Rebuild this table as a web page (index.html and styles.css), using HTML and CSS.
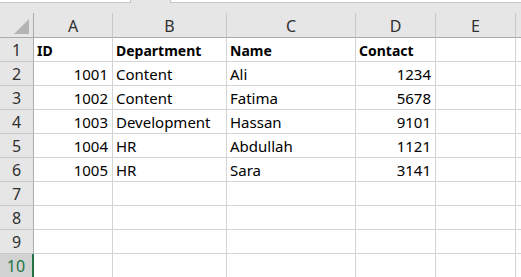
FILE: index.html
```html
<!DOCTYPE html>
<html>
<head>
<meta charset="utf-8">
<link rel="stylesheet" href="styles.css">
</head>
<body>
<div class="topbar">
  <div class="box box-name"></div>
  <div class="box box-formula"></div>
</div>
<div class="sheet">
  <div class="corner"><span class="tri"></span></div>
  <div class="ch">A</div><div class="ch">B</div><div class="ch">C</div><div class="ch">D</div><div class="ch">E</div><div class="ch last"></div>

  <div class="rh">1</div><div class="c b">ID</div><div class="c b">Department</div><div class="c b">Name</div><div class="c b">Contact</div><div class="c"></div><div class="c"></div>
  <div class="rh">2</div><div class="c r">1001</div><div class="c">Content</div><div class="c">Ali</div><div class="c r">1234</div><div class="c"></div><div class="c"></div>
  <div class="rh">3</div><div class="c r">1002</div><div class="c">Content</div><div class="c">Fatima</div><div class="c r">5678</div><div class="c"></div><div class="c"></div>
  <div class="rh">4</div><div class="c r">1003</div><div class="c">Development</div><div class="c">Hassan</div><div class="c r">9101</div><div class="c"></div><div class="c"></div>
  <div class="rh">5</div><div class="c r">1004</div><div class="c">HR</div><div class="c">Abdullah</div><div class="c r">1121</div><div class="c"></div><div class="c"></div>
  <div class="rh">6</div><div class="c r">1005</div><div class="c">HR</div><div class="c">Sara</div><div class="c r">3141</div><div class="c"></div><div class="c"></div>
  <div class="rh">7</div><div class="c"></div><div class="c"></div><div class="c"></div><div class="c"></div><div class="c"></div><div class="c"></div>
  <div class="rh">8</div><div class="c"></div><div class="c"></div><div class="c"></div><div class="c"></div><div class="c"></div><div class="c"></div>
  <div class="rh">9</div><div class="c"></div><div class="c"></div><div class="c"></div><div class="c"></div><div class="c"></div><div class="c"></div>
  <div class="rh sel">10</div><div class="c"></div><div class="c"></div><div class="c"></div><div class="c"></div><div class="c"></div><div class="c"></div>
</div>
</body>
</html>
```
FILE: styles.css
```css
html, body {
  margin: 0;
  padding: 0;
  background: #e6e6e6;
  overflow: hidden;
  width: 521px;
  height: 277px;
}
body {
  font-family: "Noto Sans", "Open Sans", sans-serif;
  color: #000;
}
.topbar {
  height: 13px;
  display: flex;
  gap: 39px;
  align-items: flex-start;
}
.box {
  height: 2px;
  background: #fff;
  border-bottom: 1px solid #c6c6c6;
}
.box-name { width: 130px; border-right: 1px solid #c6c6c6; }
.box-formula { flex: 1; border-left: 1px solid #c6c6c6; }
.sheet {
  display: grid;
  grid-template-columns: 34px 79px 114px 129px 80px 80px 1fr;
  grid-template-rows: 25px repeat(10, 24px);
  background: #fff;
}
.corner {
  background: #e6e6e6;
  border-right: 1px solid #ababab;
  border-bottom: 1px solid #ababab;
  position: relative;
}
.tri {
  position: absolute;
  right: 4px;
  bottom: 3px;
  width: 0;
  height: 0;
  border-left: 15px solid transparent;
  border-bottom: 15px solid #b4b4b4;
}
.ch {
  background: #e6e6e6;
  border-right: 1px solid #c8c8c8;
  border-bottom: 1px solid #ababab;
  display: flex;
  align-items: center;
  justify-content: center;
  font-size: 16px;
  color: #303030;
  padding-top: 2px;
}
.ch.last { border-right: none; }
.rh {
  background: #e6e6e6;
  border-right: 1px solid #ababab;
  border-bottom: 1px solid #c8c8c8;
  display: flex;
  align-items: center;
  justify-content: center;
  font-size: 16px;
  color: #303030;
}
.rh.sel {
  background: #d2d2d2;
  color: #217346;
  border-right: 2px solid #217346;
  border-bottom: none;
}
.c {
  border-right: 1px solid #d4d4d4;
  border-bottom: 1px solid #d4d4d4;
  display: flex;
  align-items: center;
  padding: 1px 4px 0 3px;
  font-size: 15px;
  white-space: nowrap;
  overflow: hidden;
}
.c.r { justify-content: flex-end; }
.c.b { font-weight: bold; font-size: 14px; }
```
